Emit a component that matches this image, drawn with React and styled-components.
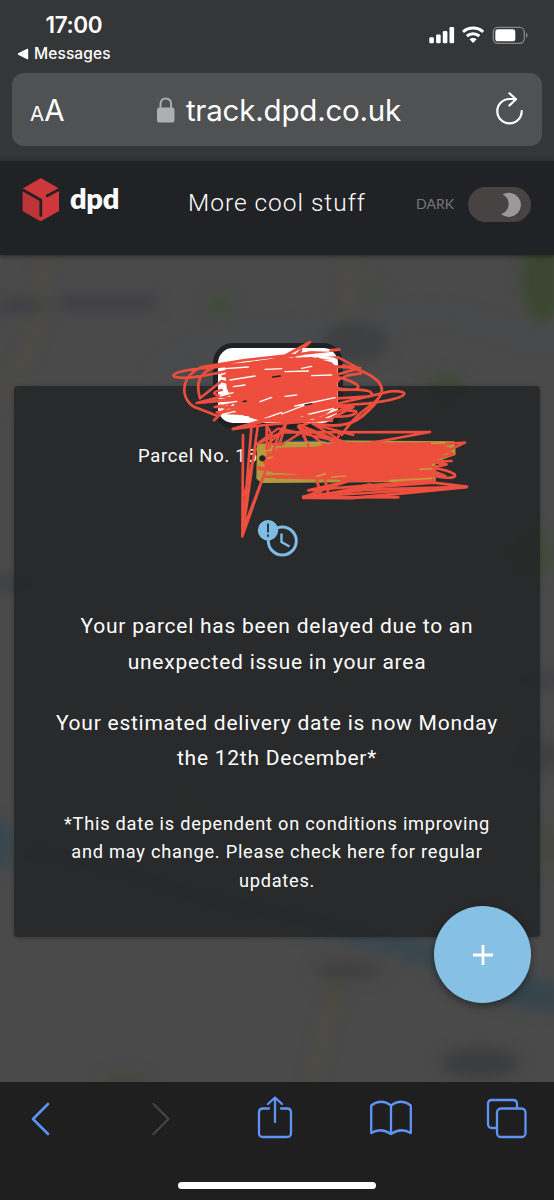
import React from "react";
import styled, { createGlobalStyle } from "styled-components";

const GlobalStyle = createGlobalStyle`
  *, *::before, *::after { box-sizing: border-box; }
  body { margin: 0; background: #1f1f1f; }
`;

const Screen = styled.div`
  width: 554px;
  height: 1200px;
  display: flex;
  flex-direction: column;
  overflow: hidden;
  color: #fff;
  font-family: Roboto, "Liberation Sans", sans-serif;
`;

const BrowserTop = styled.div`
  height: 161px;
  flex: none;
  padding: 12px 12px 0;
  background: #353638;
  font-family: Inter, "Liberation Sans", sans-serif;
`;

const StatusRow = styled.div`
  height: 61px;
  display: flex;
  justify-content: space-between;
  padding: 0 14px 0 5px;
`;

const Clock = styled.div`
  padding-left: 28.5px;
  font-size: 22.5px;
  line-height: 26px;
  font-weight: 600;
  letter-spacing: -0.35px;
`;

const BackLink = styled.div`
  display: flex;
  align-items: center;
  gap: 5px;
  margin-top: 5.5px;
  font-size: 15.5px;
  line-height: 20px;
  font-weight: 500;
  letter-spacing: 0.1px;
`;

const StatusIcons = styled.div`
  padding-top: 13px;
`;

const AddressBar = styled.div`
  height: 73px;
  border-radius: 12px;
  background: #505153;
  display: flex;
  align-items: center;
  justify-content: space-between;
  padding: 0 19px 0 18px;
`;

const TextSize = styled.div`
  width: 40px;
  padding-top: 5px;
  white-space: nowrap;
  font-size: 29.5px;
  line-height: 40px;
`;

const Small = styled.span`
  font-size: 20.5px;
`;

const Address = styled.div`
  display: flex;
  align-items: center;
  gap: 11px;
  margin-right: 8px;
  font-size: 29.5px;
  line-height: 40px;
  letter-spacing: -0.2px;
`;

const SiteHeader = styled.header`
  height: 94px;
  flex: none;
  position: relative;
  z-index: 2;
  display: flex;
  align-items: flex-start;
  padding: 17px 23px 0 22px;
  background: #212226;
  box-shadow: 0 1px 5px rgba(0, 0, 0, 0.5);
`;

const Brand = styled.div`
  width: 166px;
  display: flex;
  align-items: flex-start;
  gap: 10px;
`;

const BrandName = styled.span`
  margin-top: 3px;
  font: 800 29px/34px Lato, sans-serif;
  letter-spacing: -0.3px;
`;

const HeaderTitle = styled.div`
  flex: 1;
  padding-top: 9px;
  font-size: 24.5px;
  line-height: 32px;
  font-weight: 300;
  letter-spacing: 0.98px;
  white-space: nowrap;
`;

const ThemeLabel = styled.div`
  padding-top: 16px;
  margin-right: 14px;
  color: #77787b;
  font: 400 14px/20px Lato, sans-serif;
`;

const ThemeSwitch = styled.div`
  width: 63px;
  height: 35px;
  margin-top: 9px;
  border-radius: 18px;
  background: #474343;
  display: flex;
  align-items: center;
  justify-content: flex-end;
  padding-right: 8px;
`;

const Content = styled.main`
  height: 827px;
  flex: none;
  position: relative;
  background: #4a4a4a;
  padding: 131px 14px 0;
`;

const MapLayer = styled.svg`
  position: absolute;
  inset: 0;
`;

const Card = styled.section`
  position: relative;
  height: 551px;
  border-radius: 4px;
  background: rgba(36, 37, 39, 0.86);
  box-shadow: 0 1px 5px rgba(0, 0, 0, 0.25);
  text-align: center;
`;

const Badge = styled.div`
  position: absolute;
  left: 199px;
  top: -43px;
  width: 130px;
  height: 85px;
  border: 5.5px solid #1f2126;
  border-radius: 20px;
  background: #fff;
`;

const ParcelNumber = styled.div`
  padding: 58px 0 0 124px;
  text-align: left;
  font-size: 18.4px;
  line-height: 24px;
  letter-spacing: 0.76px;
`;

const DelayIcon = styled.svg`
  display: block;
  margin: 49px 0 0 242px;
`;

const Message = styled.p`
  margin: ${(p) => p.$top}px 0 0;
  font-size: 21px;
  line-height: 35.6px;
  letter-spacing: 0.75px;
`;

const Footnote = styled.p`
  margin: 33px 0 0;
  font-size: 18.2px;
  line-height: 28.5px;
  letter-spacing: 0.76px;
`;

const Scribble = styled.svg`
  position: absolute;
  left: 165px;
  top: 80px;
`;

const AddButton = styled.button`
  position: absolute;
  left: 434px;
  top: 651px;
  width: 97px;
  height: 97px;
  border: 0;
  padding: 0;
  border-radius: 50%;
  background: #86c0e5;
  box-shadow: 0 3px 9px rgba(0, 0, 0, 0.4);
  display: flex;
  align-items: center;
  justify-content: center;
`;

const BrowserBottom = styled.footer`
  height: 118px;
  flex: none;
  background: #1f1f1f;
  display: flex;
  flex-direction: column;
  align-items: center;
`;

const Actions = styled.div`
  width: 100%;
  height: 100px;
  display: flex;
  justify-content: space-between;
  padding: 14px 26.5px 0 21.5px;
`;

const ActionIcon = styled.svg.attrs({ width: 42, height: 46, viewBox: "0 0 42 46", fill: "none" })`
  stroke: ${(p) => (p.$disabled ? "#444" : "#5e94f5")};
  stroke-width: ${(p) => p.$weight || 2.3};
  stroke-linecap: round;
  stroke-linejoin: round;
`;

const HomeBar = styled.div`
  width: 198px;
  height: 7px;
  border-radius: 4px;
  background: #fff;
`;

const StatusGlyphs = () => (
  <svg width="100" height="20" viewBox="428 25 100 20" fill="#fff">
    <rect x="429.3" y="37.3" width="4.6" height="6" rx="1.2" />
    <rect x="436.1" y="34.5" width="4.6" height="8.8" rx="1.2" />
    <rect x="442.8" y="31" width="4.6" height="12.3" rx="1.2" />
    <rect x="449.5" y="27" width="4.6" height="16.3" rx="1.2" />
    <g fill="none" stroke="#fff" strokeWidth="3">
      <path d="M463 31.8c6-5 14.200-5 20.200 0" />
      <path d="M466.800 36c3.700-3 8.900-3 12.600 0" />
    </g>
    <path d="M469.500 39.300c2-1.800 5.200-1.800 7.200 0l-3.600 3.800z" />
    <rect x="493.300" y="27.300" width="31" height="16" rx="4.500" fill="none" stroke="#858688" strokeWidth="1.300" />
    <rect x="495.300" y="29.300" width="20" height="12" rx="2.600" />
    <path d="M526 32.600c2 .8 2 4.600 0 5.400z" fill="#858688" />
  </svg>
);

const Lock = () => (
  <svg width="18" height="26" viewBox="0 0 18 26">
    <rect x="0" y="10.500" width="17.500" height="15" rx="2.600" fill="#aeafb3" />
    <path d="M3.500 11.500V7c0-7.400 10.600-7.400 10.600 0v4.500" fill="none" stroke="#aeafb3" strokeWidth="2" />
  </svg>
);

const Reload = () => (
  <svg width="27" height="36" viewBox="0 0 27 36" fill="none" stroke="#fff" strokeWidth="2.200" strokeLinecap="round" strokeLinejoin="round">
    <path d="M25.700 19.200A12.200 12.200 0 1 1 13.500 7h6" />
    <path d="M13.400 1.300L20 7.200L13.400 13.500" />
  </svg>
);

const Cube = () => (
  <svg width="38" height="45" viewBox="0 0 38 45">
    <path d="M18.800 0L37 10.500V33L18.800 43.300L.8 33V10.500z" fill="#cf383a" />
    <path d="M.8 11L17.500 21V42.500L.8 33z" fill="#bd3437" />
    <path d="M0 11.500L18.800 22V37.500" fill="none" stroke="#242126" strokeWidth="2.800" strokeLinecap="round" strokeLinejoin="round" />
    <path d="M25.300 17.800L38 11" fill="none" stroke="#242126" strokeWidth="2.800" strokeLinecap="round" />
  </svg>
);

const mapAreas = [
  ["#3e4c37", 220, 50, 12, 10],
  ["#3b4730", 542, 25, 20, 42],
  ["#434b3e", 374, 36, 9, 9],
  ["#3f4a37", 447, 132, 19, 14],
  ["#3e3f40", 355, 87, 34, 20],
  ["#414b3b", 532, 300, 24, 22],
  ["#414b3b", 259, 506, 12, 9],
  ["#444a3d", 186, 548, 10, 12],
  ["#35474f", 0, 590, 12, 25],
  ["#444737", 550, 592, 6, 22],
  ["#3e4045", 0, 328, 40, 8],
  ["#404046", 545, 425, 30, 8],
  ["#404040", 540, 501, 28, 16],
  ["#3b3c3d", 480, 808, 40, 15],
  ["#404040", 348, 715, 36, 10],
  ["#484837", 334, 740, 9, 8],
  ["#454739", 125, 825, 22, 6],
];

const MapBackdrop = () => (
  <MapLayer width="554" height="827" viewBox="0 0 554 827">
    <defs>
      <filter id="soft" x="-10%" y="-10%" width="120%" height="120%" colorInterpolationFilters="sRGB">
        <feGaussianBlur stdDeviation="7" />
      </filter>
    </defs>
    <rect width="554" height="827" fill="#4a4a4a" />
    <g filter="url(#soft)">
      <path d="M20 600C100 595 150 635 235 650S350 675 430 700S490 728 570 740" stroke="#3a474e" strokeWidth="24" fill="none" />
      <path d="M440 712Q500 742 570 746" stroke="#36444c" strokeWidth="24" fill="none" />
      <path d="M155 118C220 65 310 85 390 65S490 85 554 85" stroke="#464c4f" strokeWidth="10" fill="none" />
      <path d="M44 0L38 68L22 110L0 150M350 0L347 60M334 736L312 827" stroke="#4f4c40" strokeWidth="8" fill="none" />
      <path d="M0 50H43M58 48H157" stroke="#3c3d43" strokeWidth="12" fill="none" />
      {mapAreas.map(([fill, cx, cy, rx, ry], i) => (
        <ellipse key={i} cx={cx} cy={cy} rx={rx} ry={ry} fill={fill} />
      ))}
    </g>
  </MapLayer>
);

const Redaction = () => (
  <Scribble width="310" height="210" viewBox="0 0 930 630" fill="none" stroke="#ed4e3d" strokeWidth="8" strokeLinecap="round" strokeLinejoin="round">
    <path d="M278 328L480 318L868 321L870 358L810 380V438L290 442L276 430z" fill="#b39b3d" stroke="#b39b3d" strokeWidth="4" />
    <path d="M330 317Q440 322 520 316" stroke="#243a65" />
    <path d="M180 92L330 70L440 66L500 82L518 100V210L480 240L400 265L300 262L215 235L205 200L185 160z" fill="#ed4e3d" stroke="none" />
    <path d="M300 365L340 338L450 335L520 320L830 328L865 343L820 368L800 390L806 436L540 442L470 415L370 412L305 392z" fill="#ed4e3d" stroke="none" />
    <path d="M388 65L435 21L337 75L130 99C-10 108 0 140 105 124S390 48 523 44L240 75L110 96C35 130 50 205 98 220L160 244L147 256L215 190L95 204L255 162L170 138L105 190C88 132 112 100 177 91L520 67L575 97L430 91L585 99L520 118L340 91L173 123L500 142" />
    <path d="M535 91C650 120 665 160 640 190S585 220 530 300M515 125C610 150 595 175 505 158M520 190L615 184C632 170 606 160 528 165L410 150M510 213L610 205C735 190 744 165 675 169L500 210L420 203L565 216L490 254L300 270L205 282L330 245L565 210L400 276M515 245C570 245 596 226 552 227M520 138L190 220L315 230L548 121L588 115M170 165C120 175 160 185 235 196L149 216L290 219L155 232L300 240L390 180L110 202" />
    <path d="M172 75L270 54L360 43M415 43L490 46M465 66L508 72" stroke="#fff" strokeWidth="8" />
    <path d="M180 101L250 96M300 103L350 101M410 100L440 94M195 135L270 123M360 110L430 108M440 122L500 120M205 155L240 150M360 184L395 180M166 183L204 173M170 207L215 199M285 200L320 187M390 213L510 188M350 237L425 208M410 243L505 220M300 250L350 232M172 238L210 229M185 251L250 245" stroke="#fff" strokeWidth="4" />
    <path d="M323 126L346 123M234 200L244 198M420 210L440 206" stroke="#241b31" strokeWidth="4" />
    <path d="M204 282L390 235L500 257M210 280L310 252M450 266C560 285 585 252 630 207" strokeWidth="9" />
    <path d="M234 300L232 604L260 270M232 604L278 275M232 604L300 411L320 300L305 270V350M238 480L272 340M242 565L345 292L363 265L343 329" strokeWidth="8" />
    <path d="M285 320L340 280L525 320L405 270L430 333L400 272L480 330M362 283L310 325L350 330L425 282L505 320M440 265L540 324M515 320L525 290M460 272L565 300" strokeWidth="7" />
    <path d="M275 327L350 292L795 291L600 327L830 325L610 344L900 323L845 349L865 358L785 377L845 388L800 398C910 415 875 440 805 422M300 380L840 352M310 395L860 378M325 410L795 402M300 425L800 420M805 435L430 466L550 438L415 486L605 474L905 455L805 443L615 457L415 486L700 487" />
    <path d="M415 488L560 489L700 476L905 456M415 485L600 464L900 456M455 433L467 480M480 435L490 475" strokeWidth="9" />
    <path d="M300 383L410 345M280 400L460 420L565 350M335 425L625 430M615 450L510 475M780 400L840 425" strokeWidth="12" />
    <path d="M360 323L480 322M300 348L320 344M455 424L482 416M500 426L540 423M675 437L800 430M765 403L800 401M800 325L838 323M307 370L323 366" stroke="#c79b3b" strokeWidth="5" />
    <circle cx="292" cy="370" r="8" fill="#202322" stroke="#202322" strokeWidth="3" />
  </Scribble>
);

export default function App() {
  return (
    <Screen>
      <GlobalStyle />
      <BrowserTop>
        <StatusRow>
          <div>
            <Clock>17:00</Clock>
            <BackLink>
              <svg width="12" height="12" viewBox="0 0 12 12"><path d="M1.500 6L10.500 1.500v9z" fill="#fff" stroke="#fff" strokeWidth="1.400" strokeLinejoin="round" /></svg>
              Messages
            </BackLink>
          </div>
          <StatusIcons><StatusGlyphs /></StatusIcons>
        </StatusRow>
        <AddressBar>
          <TextSize><Small>A</Small>A</TextSize>
          <Address><Lock />track.dpd.co.uk</Address>
          <Reload />
        </AddressBar>
      </BrowserTop>
      <SiteHeader>
        <Brand><Cube /><BrandName>dpd</BrandName></Brand>
        <HeaderTitle>More cool stuff</HeaderTitle>
        <ThemeLabel>DARK</ThemeLabel>
        <ThemeSwitch>
          <svg width="22" height="25" viewBox="0 0 22 25"><path d="M1.500 2.500A12.100 12.100 0 1 1 0 22C10 19.500 10 6 1.500 2.500z" fill="#999" /></svg>
        </ThemeSwitch>
      </SiteHeader>
      <Content>
        <MapBackdrop />
        <Card>
          <Badge />
          <ParcelNumber>Parcel No. 155</ParcelNumber>
          <DelayIcon width="44" height="42" viewBox="0 0 44 42">
            <circle cx="26.300" cy="24" r="14" fill="none" stroke="#7ebce3" strokeWidth="3" />
            <path d="M25.500 16.500V25L33.500 29.500" fill="none" stroke="#7ebce3" strokeWidth="2.400" />
            <circle cx="12" cy="13.300" r="10.200" fill="#7ebce3" />
            <path d="M12 6.500V15.500M12 17.500V19.800" stroke="#25323a" strokeWidth="1.900" />
          </DelayIcon>
          <Message $top={50}>Your parcel has been delayed due to an<br />unexpected issue in your area</Message>
          <Message $top={25.5}>Your estimated delivery date is now Monday<br />the 12th December*</Message>
          <Footnote>*This date is dependent on conditions improving<br />and may change. Please check here for regular<br />updates.</Footnote>
        </Card>
        <Redaction />
        <AddButton aria-label="Add">
          <svg width="20" height="20" viewBox="0 0 20 20"><path d="M10 0V20M0 10H20" stroke="#fff" strokeWidth="2.800" /></svg>
        </AddButton>
      </Content>
      <BrowserBottom>
        <Actions>
          <ActionIcon $weight={2.6}><path d="M26 8L11 23L26 38" /></ActionIcon>
          <ActionIcon $weight={2.4} $disabled><path d="M15.500 8L30.500 23L15.500 38" /></ActionIcon>
          <ActionIcon><path d="M15 12.500H9Q5 12.500 5 16.500V37Q5 41 9 41H33Q37 41 37 37V16.500Q37 12.500 33 12.500H27M21 26V2M14 8L21 1.500L28 8" /></ActionIcon>
          <ActionIcon><path d="M21 9.500Q11 2 1.200 9.500V37Q11 31 21 38Q31 31 40.800 37V9.500Q31 2 21 9.500V38" /></ActionIcon>
          <ActionIcon><path d="M10.500 32H6Q2 32 2 28V8Q2 4 6 4H27Q31 4 31 8V12.500" /><rect x="11" y="12.500" width="28.500" height="28.500" rx="4" /></ActionIcon>
        </Actions>
        <HomeBar />
      </BrowserBottom>
    </Screen>
  );
}
